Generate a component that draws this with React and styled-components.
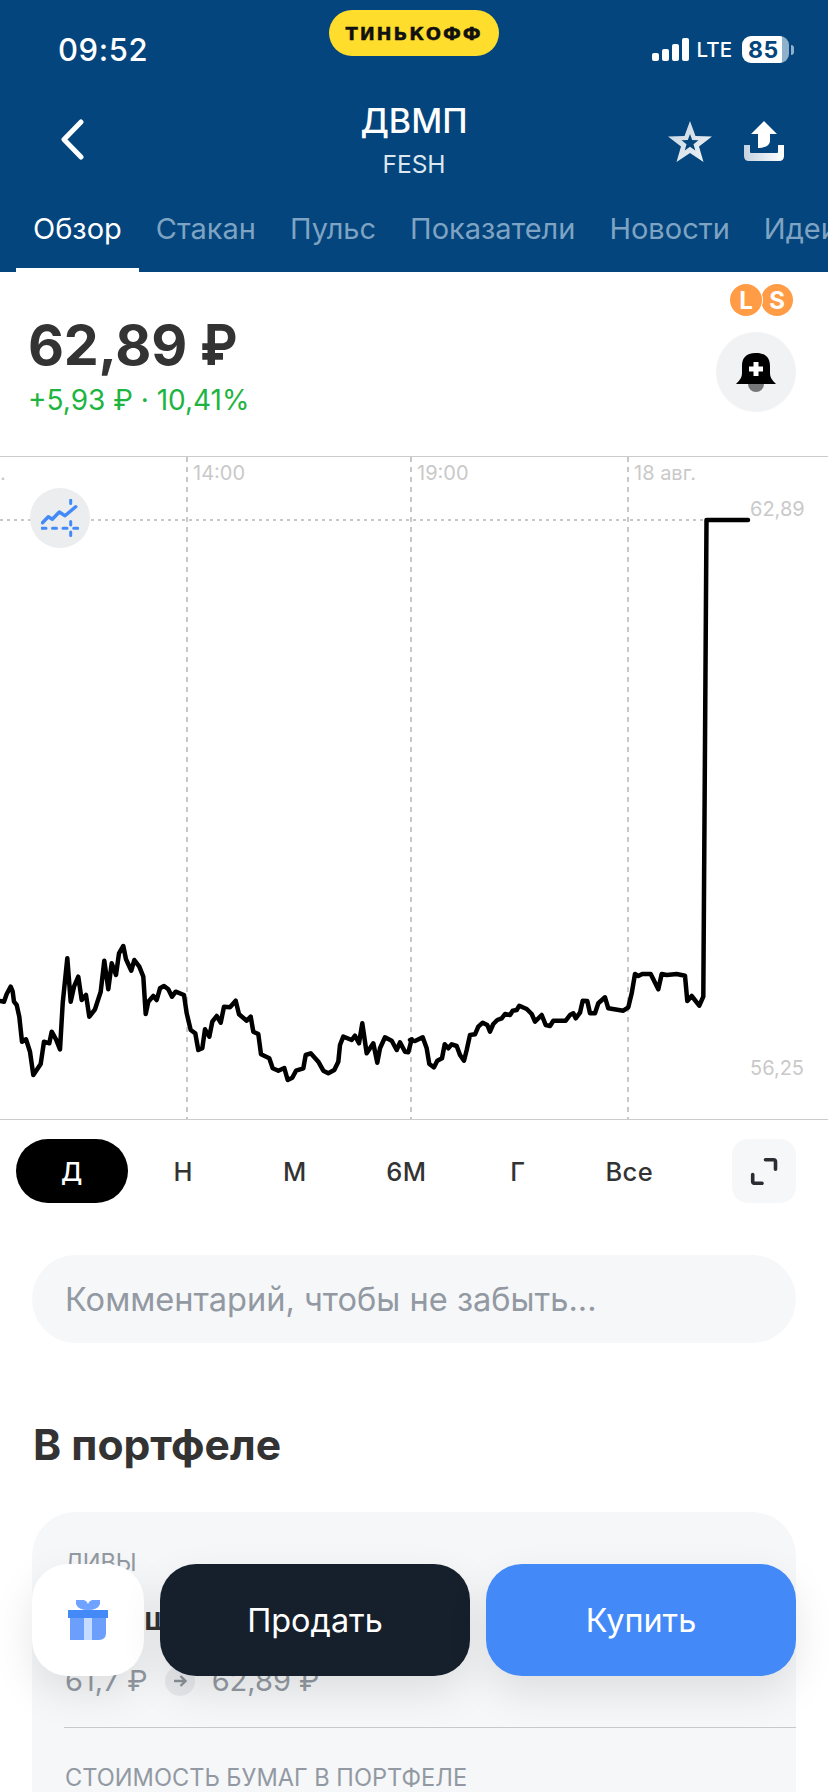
import React from "react";
import styled, { createGlobalStyle } from "styled-components";

const Global = createGlobalStyle`
  html, body { margin: 0; padding: 0; background: #fff; }
  * { box-sizing: border-box; }
  body { font-family: Inter, "Noto Sans", "Liberation Sans", sans-serif; }
`;

const Screen = styled.div`
  position: relative;
  width: 828px;
  height: 1792px;
  overflow: hidden;
  background: #fff;
  color: #333;
`;

const Header = styled.header`
  height: 272px;
  background: #03457c;
  color: #fff;
  display: flex;
  flex-direction: column;
`;

const StatusBar = styled.div`
  height: 88px;
  display: flex;
  align-items: flex-start;
  justify-content: space-between;
  position: relative;
  padding: 36px 34px 0 58px;
`;

const Time = styled.div`
  font-size: 31px;
  line-height: 28px;
  font-weight: 500;
  letter-spacing: 0.6px;
`;

const Brand = styled.div`
  position: absolute;
  left: 329px;
  top: 10px;
  width: 170px;
  height: 46px;
  border-radius: 23px;
  background: #ffdd2d;
  color: #111;
  font-family: "DejaVu Sans", sans-serif;
  font-weight: 700;
  font-size: 18px;
  letter-spacing: 1.9px;
  -webkit-text-stroke: 0.4px #111;
  display: flex;
  align-items: center;
  justify-content: center;
`;

const StatusRight = styled.div`
  display: flex;
  align-items: center;
  height: 27px;
`;

const Lte = styled.span`
  font-size: 20.5px;
  font-weight: 500;
  margin: 0 10px 0 8px;
`;

const Battery = styled.div`
  width: 47px;
  height: 27px;
  border-radius: 9px;
  background: linear-gradient(to right, #fff 0 85%, #8fb0cb 85% 100%);
  color: #03457c;
  font-weight: 700;
  font-size: 23px;
  letter-spacing: 0.5px;
  display: flex;
  align-items: center;
  justify-content: flex-start;
  padding-left: 6px;
`;

const BatteryTip = styled.div`
  width: 3px;
  height: 10px;
  margin-left: 2px;
  border-radius: 0 3px 3px 0;
  background: #8fb0cb;
`;

const NavRow = styled.div`
  height: 110px;
  display: flex;
  align-items: center;
  justify-content: space-between;
  position: relative;
  padding: 0 44px 8px 60px;
`;

const TitleBlock = styled.div`
  position: absolute;
  left: 0;
  right: 0;
  top: 12px;
  text-align: center;
`;

const Title = styled.div`
  font-size: 34px;
  line-height: 42px;
  font-weight: 500;
`;

const Ticker = styled.div`
  font-size: 24.5px;
  line-height: 30px;
  margin-top: 7px;
  color: #dde7ef;
`;

const NavActions = styled.div`
  display: flex;
  align-items: center;
  gap: 32px;
  margin-top: 4px;
`;

const Tabs = styled.nav`
  flex: 1;
  display: flex;
  align-items: stretch;
  padding-left: 16px;
  overflow: hidden;
`;

const Tab = styled.div`
  flex: none;
  padding: 13px 17px 0;
  font-size: 29px;
  line-height: 36px;
  color: ${(p) => (p.$active ? "#fff" : "#7fa3c2")};
  border-bottom: 4px solid ${(p) => (p.$active ? "#fff" : "transparent")};
`;

const Quote = styled.section`
  height: 184px;
  position: relative;
  padding: 43px 0 0 28px;
  display: flex;
  flex-direction: column;
`;

const Price = styled.div`
  font-size: 55.5px;
  line-height: 60px;
  font-weight: 700;
  color: #333;
  letter-spacing: -0.2px;
`;

const Ruble = styled.span`
  display: inline-block;
  font-size: 56px;
  margin-left: 0;
  transform: scaleX(0.9);
  transform-origin: left center;
`;

const Change = styled.div`
  font-size: 28px;
  line-height: 34px;
  margin-top: 8px;
  color: #1db53f;
`;

const Badges = styled.div`
  position: absolute;
  left: 730px;
  top: 12px;
  display: flex;
`;

const Badge = styled.div`
  width: 32px;
  height: 32px;
  border-radius: 50%;
  background: #ff9c45;
  color: #fff;
  font-size: 24px;
  font-weight: 700;
  display: flex;
  align-items: center;
  justify-content: center;
  margin-left: ${(p) => (p.$second ? "-1px" : "0")};
  box-shadow: ${(p) => (p.$first ? "0 0 0 1px #fff" : "none")};
  z-index: ${(p) => (p.$first ? 1 : 0)};
`;

const BellButton = styled.div`
  position: absolute;
  left: 716px;
  top: 60px;
  width: 80px;
  height: 80px;
  border-radius: 50%;
  background: #f1f2f4;
  display: flex;
  align-items: center;
  justify-content: center;
`;

const ChartBox = styled.section`
  height: 664px;
  position: relative;
  border-top: 1px solid #ccc;
  border-bottom: 1px solid #ccc;
`;

const ChartSvg = styled.svg`
  display: block;
  width: 828px;
  height: 662px;
`;

const IndicatorButton = styled.div`
  position: absolute;
  left: 30px;
  top: 31px;
  width: 60px;
  height: 60px;
  border-radius: 50%;
  background: #ebedef;
  display: flex;
  align-items: center;
  justify-content: center;
`;

const Periods = styled.div`
  display: flex;
  align-items: center;
  padding: 0 32px 0 16px;
  margin-top: 19px;
  height: 64px;
`;

const Period = styled.div`
  flex: 0 0 111.5px;
  height: 64px;
  border-radius: 32px;
  display: flex;
  align-items: center;
  justify-content: center;
  font-size: 25.5px;
  font-weight: 500;
  letter-spacing: 0.3px;
  background: ${(p) => (p.$active ? "#000" : "transparent")};
  color: ${(p) => (p.$active ? "#fff" : "#333")};
`;

const Expand = styled.div`
  margin-left: auto;
  width: 64px;
  height: 64px;
  border-radius: 16px;
  background: #f6f7f8;
  display: flex;
  align-items: center;
  justify-content: center;
`;

const CommentBox = styled.div`
  margin: 52px 32px 0;
  height: 88px;
  border-radius: 44px;
  background: #f6f7f8;
  padding: 0 33px;
  display: flex;
  align-items: center;
  font-size: 32.6px;
  color: #9299a2;
  white-space: nowrap;
`;

const Heading = styled.h2`
  margin: 70px 0 0 33px;
  font-size: 42.6px;
  line-height: 64px;
  font-weight: 700;
  color: #333;
`;

const Card = styled.section`
  margin: 35px 32px 0;
  padding: 37px 0 0 33px;
  border-radius: 44px 44px 0 0;
  background: #f6f7f8;
  height: 400px;
`;

const CardLabel = styled.div`
  font-size: 23.6px;
  line-height: 28px;
  color: #9299a2;
  text-transform: uppercase;
  white-space: nowrap;
`;

const CardValue = styled.div`
  font-size: 32px;
  line-height: 40px;
  font-weight: 600;
  color: #333;
  margin-top: 22px;
  padding-left: 79px;
  white-space: nowrap;
`;

const PriceRow = styled.div`
  display: flex;
  align-items: center;
  margin-top: 24px;
  font-size: 29px;
  line-height: 36px;
  color: #9299a2;
`;

const ArrowDot = styled.span`
  width: 30px;
  height: 30px;
  margin: 0 17px 0 17px;
  border-radius: 50%;
  background: #e6e8eb;
  display: inline-flex;
  align-items: center;
  justify-content: center;
`;

const Divider = styled.hr`
  border: 0;
  border-top: 1px solid #c8c9cc;
  margin: 28px 0 36px -1px;
`;

const ActionBar = styled.div`
  position: absolute;
  left: 32px;
  right: 32px;
  top: 1564px;
  height: 112px;
  display: flex;
  gap: 16px;
`;

const GiftButton = styled.div`
  flex: 0 0 112px;
  border-radius: 36px;
  background: #fff;
  box-shadow: 0 16px 40px rgba(0, 0, 0, 0.1);
  display: flex;
  align-items: center;
  justify-content: center;
`;

const TradeButton = styled.div`
  flex: 1;
  border-radius: 36px;
  background: ${(p) => (p.$buy ? "#438af8" : "#161f2c")};
  color: #fff;
  font-size: 32.4px;
  display: flex;
  align-items: center;
  justify-content: center;
  box-shadow: 0 16px 40px rgba(0, 0, 0, 0.1);
`;

const raw1 = [[0,243],[12,245],[20,222],[32,200],[38,215],[42,245],[50,255],[58,290],[66,365],[78,358],[90,395],[100,465],[122,432],[132,365],[148,370],[155,335],[168,358],[180,388],[188,250],[202,115],[212,245],[222,200],[235,170],[245,240],[258,225],[268,290],[285,268],[302,215],[313,122],[325,208],[335,130],[348,165],[357,100],[370,78],[378,118],[394,152],[403,120],[418,140],[430,170],[437,282],[445,245],[460,228],[470,240],[480,205],[492,198],[505,208],[516,230],[527,215],[552,225],[560,280],[572,330],[586,340],[595,390],[607,385],[615,328],[628,350],[637,305],[650,288],[662,308],[672,260],[690,262],[707,242],[717,283],[740,302],[752,290],[760,335],[775,342],[783,403],[808,415],[818,445],[835,452],[853,444],[863,480],[877,473],[888,452],[910,445],[917,405],[932,400],[955,425],[970,452],[985,460],[1003,450],[1015,425],[1020,375],[1030,350],[1055,360],[1065,347],[1077,370],[1087,310],[1100,400],[1120,370],[1132,428],[1140,385],[1155,352],[1175,362],[1190,390],[1200,367],[1215,395],[1225,397],[1235,358]];
const raw2 = [[0,360],[15,363],[38,352],[50,385],[58,432],[72,442],[82,422],[96,415],[104,373],[115,385],[125,373],[140,378],[150,405],[162,422],[170,390],[180,345],[195,343],[205,320],[218,308],[232,315],[240,335],[250,312],[262,300],[275,295],[285,282],[300,285],[308,272],[320,270],[328,257],[350,267],[365,282],[375,305],[395,285],[407,315],[420,318],[430,302],[467,302],[480,285],[490,280],[497,295],[510,278],[518,242],[532,243],[540,280],[555,280],[565,250],[585,232],[595,265],[640,272],[655,262],[665,220],[675,162],[685,168],[697,162],[722,162],[745,208],[755,162],[770,165],[800,162],[825,167],[832,243],[845,228],[868,257],[880,230]];

const OFFSET_Y = 457;
const chartPoints = [
  ...raw1.map(([x, y]) => [x / 3, 920 + y / 3 - OFFSET_Y]),
  ...raw2.map(([x, y]) => [410 + x / 3, 920 + y / 3 - OFFSET_Y]),
  [706.5, 63],
  [748, 63],
]
  .map(([x, y]) => `${x.toFixed(1)},${y.toFixed(1)}`)
  .join(" ");

const AxisText = (props) => (
  <text fontFamily="Inter, sans-serif" fontSize="20" fill="#c9c9c9" {...props} />
);

const Chart = () => (
  <ChartSvg viewBox="0 0 828 662">
    {[187, 411, 628].map((x) => (
      <line key={x} x1={x} x2={x} y1="0" y2="662" stroke="#c8c8c8" strokeWidth="2" strokeDasharray="5 5" />
    ))}
    <line x1="0" x2="750" y1="63" y2="63" stroke="#c8c8c8" strokeWidth="2" strokeDasharray="3 4" />
    <AxisText x="0" y="23">.</AxisText>
    <AxisText x="193" y="23">14:00</AxisText>
    <AxisText x="417" y="23">19:00</AxisText>
    <AxisText x="634" y="23">18 авг.</AxisText>
    <AxisText x="750" y="59">62,89</AxisText>
    <AxisText x="750" y="618">56,25</AxisText>
    <polyline points={chartPoints} fill="none" stroke="#000" strokeWidth="4.5" strokeLinejoin="round" strokeLinecap="round" />
  </ChartSvg>
);

const Signal = () => (
  <svg width="37" height="23" viewBox="0 0 37 23">
    <rect x="0" y="15" width="7" height="8" rx="2" fill="#fff" />
    <rect x="10" y="11" width="7" height="12" rx="2" fill="#fff" />
    <rect x="20" y="6" width="7" height="17" rx="2" fill="#fff" />
    <rect x="30" y="0" width="7" height="23" rx="2" fill="#fff" />
  </svg>
);

const Back = () => (
  <svg width="24" height="41" viewBox="0 0 24 41">
    <path d="M21 3 L4 20.5 L21 38" fill="none" stroke="#fff" strokeWidth="5" strokeLinecap="round" strokeLinejoin="round" />
  </svg>
);

const Star = () => (
  <svg width="44" height="41" viewBox="0 0 44 41">
    <defs>
      <linearGradient id="starG" x1="0" y1="0" x2="1" y2="1">
        <stop offset="0" stopColor="#c5d3e0" />
        <stop offset="1" stopColor="#f0f4f7" />
      </linearGradient>
    </defs>
    <path
      fillRule="evenodd"
      d="M22 0 L27.5 15 L44 15.5 L31 25.5 L35.5 41 L22 32 L8.5 41 L13 25.5 L0 15.5 L16.5 15 Z M22 13 L19.8 19 L13.5 19.3 L18.5 23.2 L16.7 29.5 L22 25.8 L27.3 29.5 L25.5 23.2 L30.5 19.3 L24.2 19 Z"
      fill="url(#starG)"
    />
  </svg>
);

const Share = () => (
  <svg width="40" height="40" viewBox="0 0 40 40">
    <defs>
      <linearGradient id="shareG" x1="0" y1="0" x2="1" y2="0">
        <stop offset="0" stopColor="#c5d3e0" />
        <stop offset="1" stopColor="#fff" />
      </linearGradient>
    </defs>
    <path d="M20 0 L33 13 L26 13 L26 20 Q26 26 15 27 L14 27 L14 13 L7 13 Z" fill="#fff" />
    <path d="M0 24 H6 V31 Q6 32 7 32 H33 Q34 32 34 31 V24 H40 V35 Q40 40 35 40 H5 Q0 40 0 35 Z" fill="url(#shareG)" />
  </svg>
);

const Bell = () => (
  <svg width="40" height="40" viewBox="0 0 40 40">
    <circle cx="20" cy="32" r="8" fill="#777" />
    <path d="M20 1 C9 1 6 7 6 14 V21 C6 26 3 29 0 32 H40 C37 29 34 26 34 21 V14 C34 7 31 1 20 1 Z" fill="#000" />
    <path d="M17.5 10 H22.5 V14.5 H27 V19.5 H22.5 V24 H17.5 V19.5 H13 V14.5 H17.5 Z" fill="#fff" />
  </svg>
);

const IndicatorIcon = () => (
  <svg width="38" height="38" viewBox="0 0 38 38">
    <path d="M1.5 23.7 L7.3 17.7 L11.3 20.3 L18.3 13 L24 16.7 L34.7 7.7" fill="none" stroke="#438af8" strokeWidth="3.4" strokeLinecap="round" strokeLinejoin="round" />
    <path d="M1 29.3 H5 M11.5 29.3 H15.5 M22 29.3 H26 M32.7 29.3 H36.7" stroke="#438af8" strokeWidth="3" strokeLinecap="round" />
    <path d="M29.7 1 V4.5 M29.7 22.5 V26 M29.7 33 V36.5" stroke="#438af8" strokeWidth="3" strokeLinecap="round" />
  </svg>
);

const ExpandIcon = () => (
  <svg width="28" height="28" viewBox="0 0 28 28">
    <path d="M15.5 2.7 H23.5 Q25.5 2.7 25.5 4.7 V12.3 M2.7 17.5 V24.3 Q2.7 26.3 4.7 26.3 H12" fill="none" stroke="#2a2d33" strokeWidth="3.6" strokeLinecap="round" />
  </svg>
);

const Gift = () => (
  <svg width="40" height="40" viewBox="0 0 40 40">
    <path d="M8 0 H16 Q19 1 20 4 Q21 1 24 0 H32 V4 Q30 10 20 10 Q10 10 8 4 Z" fill="#6ea3ff" />
    <rect x="0" y="10" width="40" height="8" fill="#438af8" />
    <path d="M2 18 H16 V40 H2 Z" fill="#6b9ffb" />
    <rect x="16" y="18" width="8" height="22" fill="#c5dbff" />
    <path d="M24 18 H38 V33 Q38 40 31 40 H24 Z" fill="#6b9ffb" />
  </svg>
);

const Arrow = () => (
  <svg width="16" height="16" viewBox="0 0 16 16">
    <path d="M2 8 H13 M8.5 3 L13.5 8 L8.5 13" fill="none" stroke="#8a9098" strokeWidth="2.4" />
  </svg>
);

const tabs = ["Обзор", "Стакан", "Пульс", "Показатели", "Новости", "Идеи"];
const periods = ["Д", "Н", "М", "6М", "Г", "Все"];

export default function App() {
  return (
    <Screen>
      <Global />
      <Header>
        <StatusBar>
          <Time>09:52</Time>
          <Brand>ТИНЬКОФФ</Brand>
          <StatusRight>
            <Signal />
            <Lte>LTE</Lte>
            <Battery>85</Battery>
            <BatteryTip />
          </StatusRight>
        </StatusBar>
        <NavRow>
          <Back />
          <TitleBlock>
            <Title>ДВМП</Title>
            <Ticker>FESH</Ticker>
          </TitleBlock>
          <NavActions>
            <Star />
            <Share />
          </NavActions>
        </NavRow>
        <Tabs>
          {tabs.map((t, i) => (
            <Tab key={t} $active={i === 0}>{t}</Tab>
          ))}
        </Tabs>
      </Header>
      <Quote>
        <Price>62,89 <Ruble>₽</Ruble></Price>
        <Change>+5,93 ₽ · 10,41%</Change>
        <Badges>
          <Badge $first>L</Badge>
          <Badge $second>S</Badge>
        </Badges>
        <BellButton><Bell /></BellButton>
      </Quote>
      <ChartBox>
        <Chart />
        <IndicatorButton><IndicatorIcon /></IndicatorButton>
      </ChartBox>
      <Periods>
        {periods.map((p, i) => (
          <Period key={p} $active={i === 0}>{p}</Period>
        ))}
        <Expand><ExpandIcon /></Expand>
      </Periods>
      <CommentBox>Комментарий, чтобы не забыть...</CommentBox>
      <Heading>В портфеле</Heading>
      <Card>
        <CardLabel>Ливы</CardLabel>
        <CardValue>ш</CardValue>
        <PriceRow>
          61,7 ₽
          <ArrowDot><Arrow /></ArrowDot>
          62,89 ₽
        </PriceRow>
        <Divider />
        <CardLabel>Стоимость бумаг в портфеле</CardLabel>
      </Card>
      <ActionBar>
        <GiftButton><Gift /></GiftButton>
        <TradeButton>Продать</TradeButton>
        <TradeButton $buy>Купить</TradeButton>
      </ActionBar>
    </Screen>
  );
}
